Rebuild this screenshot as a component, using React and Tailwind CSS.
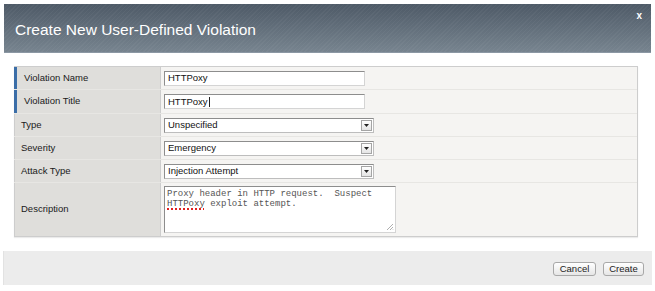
import React from 'react';

const rows = [
    { label: 'Violation Name', kind: 'text', value: 'HTTPoxy', required: true },
    { label: 'Violation Title', kind: 'text', value: 'HTTPoxy', required: true, caret: true },
    { label: 'Type', kind: 'select', value: 'Unspecified' },
    { label: 'Severity', kind: 'select', value: 'Emergency' },
    { label: 'Attack Type', kind: 'select', value: 'Injection Attempt' },
];

function TextBox({ value, caret }) {
    return (
        <div className="w-[201px] h-[15px] bg-white border border-t-[#8d8d8d] border-l-[#8d8d8d] border-r-[#d4d4d4] border-b-[#d4d4d4] flex items-center pl-[3px] text-[9.5px] text-[#111] leading-none">
            {value}
            {caret && <span className="inline-block w-px h-[10px] bg-[#222] ml-px"></span>}
        </div>
    );
}

function SelectBox({ value }) {
    return (
        <div className="w-[210px] h-[15px] bg-white border border-t-[#8d8d8d] border-l-[#8d8d8d] border-r-[#bdbdbd] border-b-[#bdbdbd] flex items-center justify-between pl-[3px] text-[9.5px] text-[#111] leading-none">
            <span>{value}</span>
            <span className="w-[11px] h-[11px] mr-px border border-[#a5a5a5] bg-gradient-to-b from-white to-[#e4e4e4] flex items-center justify-center">
                <svg width="5" height="3" viewBox="0 0 5 3">
                    <path d="M0 0 H5 L2.5 3 Z" fill="#222" />
                </svg>
            </span>
        </div>
    );
}

export default function App() {
    return (
        <div className="w-[655px] h-[291px] bg-white font-['Liberation_Sans',Arial,sans-serif] pt-[4px] px-[3px]">
            {/* Header */}
            <div className="relative h-[49px] mx-px flex items-center pl-[11px] pt-[3px] border-b border-[#8c98a4] bg-[repeating-linear-gradient(135deg,rgba(255,255,255,0.035)_0px,rgba(255,255,255,0.035)_1px,transparent_1px,transparent_3px),linear-gradient(to_bottom,#4e5a67,#77848f)]">
                <h1 className="text-[15.5px] text-white leading-none">Create New User-Defined Violation</h1>
                <span className="absolute right-[9px] top-[7px] text-[10px] font-bold text-white leading-none">x</span>
            </div>

            {/* Form table */}
            <div className="ml-[11px] mr-[14px] mt-[13px] border-t border-r border-b border-[#cdcdcd] bg-[#f5f4f2] shadow-[0_1px_1px_rgba(0,0,0,0.08)]">
                {rows.map((row) => (
                    <div key={row.label} className={`flex border-b border-[#e7e6e3] ${row.label === 'Violation Title' ? 'h-[24px]' : 'h-[23px]'}`}>
                        <div className={`w-[147px] flex items-center bg-[#dfdedb] border-r border-r-[#cdcdcd] text-[9.5px] text-[#1a1a1a] ${row.required ? 'border-l-[3px] border-l-[#3b6ea8] pl-[7px]' : 'border-l border-l-[#cdcdcd] pl-[6px]'}`}>
                            {row.label}
                        </div>
                        <div className="flex-1 flex items-center pl-[3px]">
                            {row.kind === 'text' ? <TextBox value={row.value} caret={row.caret} /> : <SelectBox value={row.value} />}
                        </div>
                    </div>
                ))}
                <div className="flex h-[53px]">
                    <div className="w-[147px] flex items-center bg-[#dfdedb] border-l border-l-[#cdcdcd] border-r border-r-[#cdcdcd] pl-[6px] text-[9.5px] text-[#1a1a1a]">
                        Description
                    </div>
                    <div className="flex-1 pl-[3px] pt-[3px]">
                        <div className="relative w-[232px] h-[47px] bg-white border border-t-[#8d8d8d] border-l-[#8d8d8d] border-r-[#d4d4d4] border-b-[#d4d4d4] px-[2px] pt-[2px] font-['Liberation_Mono',monospace] text-[9px] leading-[10px] text-[#555] whitespace-pre">
                            {'Proxy header in HTTP request.  Suspect\n'}
                            <span className="underline decoration-dotted decoration-[#e02020] decoration-[1.5px] underline-offset-2">HTTPoxy</span>
                            {' exploit attempt.'}
                            <svg className="absolute right-px bottom-px" width="8" height="8" viewBox="0 0 8 8">
                                <path d="M7 1 L1 7 M7 4 L4 7 M7 6.5 L6.5 7" stroke="#9a9a9a" strokeWidth="0.8" />
                            </svg>
                        </div>
                    </div>
                </div>
            </div>

            {/* Footer */}
            <div className="mt-[14px] h-[34px] bg-[#ececec] border-l border-[#e2e2e2] flex items-start justify-end gap-[7px] pt-[11px] pr-[8px]">
                <button className="w-[43px] h-[14px] rounded-[3px] border border-[#a8a8a8] bg-gradient-to-b from-white to-[#e6e6e6] text-[9.5px] text-[#222] leading-none">Cancel</button>
                <button className="w-[41px] h-[14px] rounded-[3px] border border-[#a8a8a8] bg-gradient-to-b from-white to-[#e6e6e6] text-[9.5px] text-[#222] leading-none">Create</button>
            </div>
        </div>
    );
}
